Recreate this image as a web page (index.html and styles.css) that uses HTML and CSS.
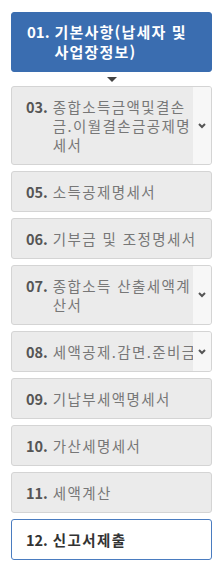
FILE: index.html
```html
<!DOCTYPE html>
<html lang="ko">
<head>
    <meta charset="UTF-8">
    <meta name="viewport" content="width=device-width, initial-scale=1.0">
    <title>신고서 작성 단계</title>
    <link rel="stylesheet" href="styles.css">
</head>
<body>
    <div class="steps">
        <div class="step current">
            <span class="num">01.</span>
            <span class="label">기본사항(납세자 및 사업장정보)</span>
        </div>
        <div class="arrow"></div>

        <div class="step has-sub">
            <div class="main">
                <span class="num">03.</span>
                <span class="label">종합소득금액및결손금.이월결손금공제명세서</span>
            </div>
            <div class="toggle"><svg width="8" height="6" viewBox="0 0 8 6"><polyline points="1,1 4,4 7,1" fill="none" stroke="#555" stroke-width="2"/></svg></div>
        </div>
        <div class="step">
            <span class="num">05.</span>
            <span class="label">소득공제명세서</span>
        </div>
        <div class="step">
            <span class="num">06.</span>
            <span class="label">기부금 및 조정명세서</span>
        </div>
        <div class="step has-sub">
            <div class="main">
                <span class="num">07.</span>
                <span class="label">종합소득 산출세액계산서</span>
            </div>
            <div class="toggle"><svg width="8" height="6" viewBox="0 0 8 6"><polyline points="1,1 4,4 7,1" fill="none" stroke="#555" stroke-width="2"/></svg></div>
        </div>
        <div class="step has-sub">
            <div class="main nowrap">
                <span class="num">08.</span>
                <span class="label">세액공제.감면.준비금명세서</span>
            </div>
            <div class="toggle"><svg width="8" height="6" viewBox="0 0 8 6"><polyline points="1,1 4,4 7,1" fill="none" stroke="#555" stroke-width="2"/></svg></div>
        </div>
        <div class="step">
            <span class="num">09.</span>
            <span class="label">기납부세액명세서</span>
        </div>
        <div class="step">
            <span class="num">10.</span>
            <span class="label">가산세명세서</span>
        </div>
        <div class="step">
            <span class="num">11.</span>
            <span class="label">세액계산</span>
        </div>
        <div class="step active">
            <span class="num">12.</span>
            <span class="label">신고서제출</span>
        </div>
    </div>
</body>
</html>
```

FILE: styles.css
```css
body {
    margin: 0;
    padding: 12px 12px 0 11px;
    font-family: "Noto Sans CJK KR", sans-serif;
    font-size: 14.5px;
    line-height: 19px;
    background: #fff;
}
.steps {
    display: flex;
    flex-direction: column;
    gap: 6px;
}
.step {
    display: flex;
    background-color: #ebebeb;
    border: 1px solid #d4d4d4;
    border-radius: 3px;
    padding: 10px 6px 10px 14px;
    color: #777;
    overflow: hidden;
}
.num {
    font-weight: bold;
    color: #555;
    margin-right: 5px;
    flex-shrink: 0;
}
.label {
    letter-spacing: 1.4px;
}
.step.current {
    background-color: #3a6db0;
    border-color: #3a6db0;
    color: #fff;
    font-weight: bold;
    font-size: 15px;
    line-height: 20px;
    padding: 9px 14px 9px 15px;
}
.step.current .num {
    color: #fff;
}
.step.current .label {
    letter-spacing: 1.2px;
}
.arrow {
    align-self: center;
    width: 0;
    height: 0;
    border-left: 5px solid transparent;
    border-right: 5px solid transparent;
    border-top: 5px solid #444;
    margin: -1px 0 -2px;
}
.step.has-sub {
    padding: 0;
}
.step.has-sub .main {
    flex: 1;
    display: flex;
    padding: 10px 0 10px 14px;
    min-width: 0;
}
.step.has-sub .main.nowrap {
    white-space: nowrap;
    overflow: hidden;
}
.toggle {
    width: 18px;
    flex-shrink: 0;
    background-color: #f7f7f7;
    display: flex;
    align-items: center;
    justify-content: center;
}
.step.active {
    background-color: #fff;
    border-color: #4a7cc0;
    color: #333;
    font-weight: bold;
}
.step.active .num {
    color: #333;
}
```
